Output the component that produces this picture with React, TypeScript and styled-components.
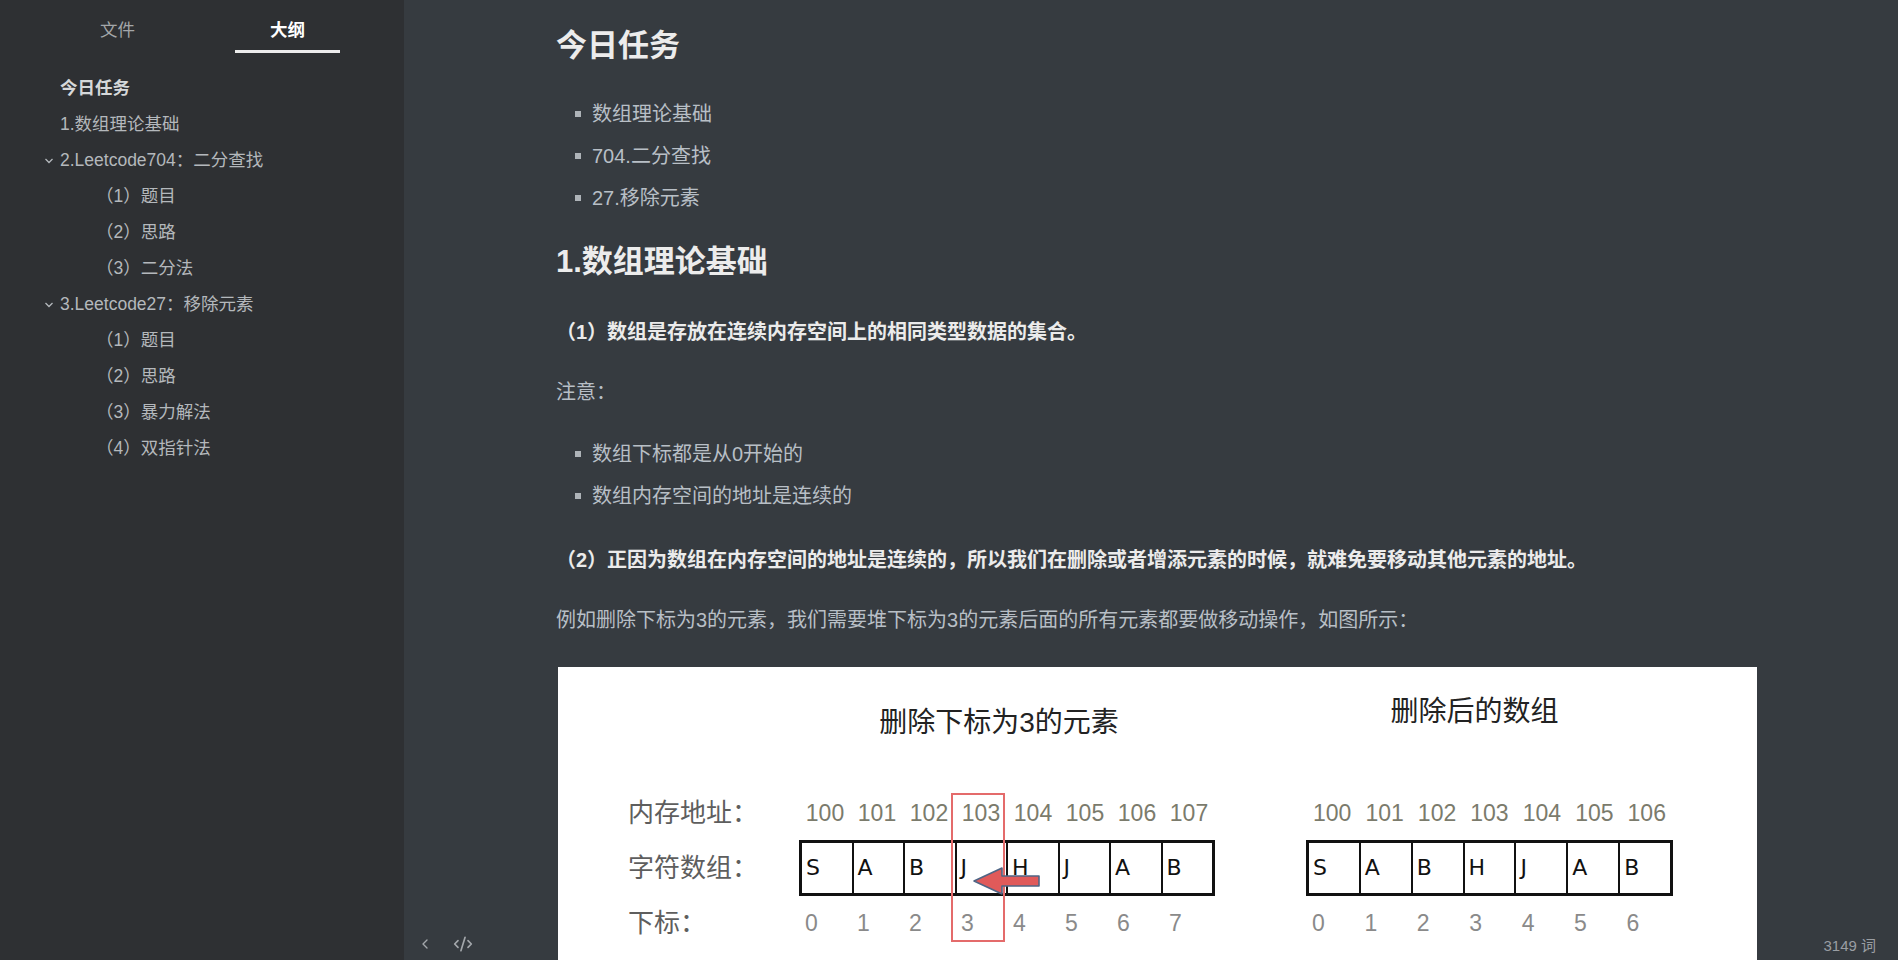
import React from "react";
import styled, { createGlobalStyle } from "styled-components";
import { ChevronLeft, CodeXml } from "lucide-react";

const GlobalStyle = createGlobalStyle`
  html, body {
    margin: 0;
    padding: 0;
    height: 100%;
    overflow: hidden;
    background: #363b40;
  }
  #root {
    height: 100%;
  }
`;

const FONT = `"Liberation Sans", "Noto Sans CJK SC", sans-serif`;

const Shell = styled.div`
  display: flex;
  height: 100vh;
  font-family: ${FONT};
`;

const Sidebar = styled.aside`
  width: 404px;
  flex-shrink: 0;
  background: #2e3033;
  display: flex;
  flex-direction: column;
`;

const TabBar = styled.div`
  display: flex;
  gap: 65px;
  padding-left: 65px;
`;

const Tab = styled.div<{ $active?: boolean }>`
  width: 105px;
  height: 53px;
  box-sizing: border-box;
  padding-top: 6px;
  display: flex;
  align-items: center;
  justify-content: center;
  font-size: 17.5px;
  color: ${({ $active }) => ($active ? "#ffffff" : "#a3a6a9")};
  font-weight: ${({ $active }) => ($active ? 700 : 400)};
  border-bottom: 3px solid
    ${({ $active }) => ($active ? "#ececec" : "transparent")};
`;

const Outline = styled.ul`
  list-style: none;
  margin: 0;
  padding: 15px 0 0;
`;

const OutlineItem = styled.li<{ $level: number; $active?: boolean }>`
  height: 36px;
  display: flex;
  align-items: center;
  padding-left: ${({ $level }) => ($level === 1 ? 44 : 96)}px;
  font-size: 17.5px;
  white-space: nowrap;
  color: ${({ $active }) => ($active ? "#d6d8da" : "#b4b8bc")};
  font-weight: ${({ $active }) => ($active ? 700 : 400)};
`;

const Toggle = styled.span`
  width: 16px;
  height: 16px;
  flex-shrink: 0;
  display: flex;
  align-items: flex-end;
  padding-bottom: 1px;
  box-sizing: border-box;
`;

const Main = styled.main`
  flex: 1;
  position: relative;
  overflow: hidden;
  background: #363b40;
`;

const Content = styled.div`
  width: 1201px;
  margin-left: 152px;
  padding-top: 24px;
  font-size: 20px;
  line-height: 32px;
  color: #b8bfc6;
`;

const H1 = styled.h1`
  margin: 0;
  font-size: 31px;
  line-height: 44px;
  font-weight: 700;
  color: #ececec;
`;

const H2 = styled.h2`
  margin: 26px 0 0;
  font-size: 31px;
  line-height: 44px;
  font-weight: 700;
  color: #ececec;
`;

const Bullets = styled.ul`
  list-style: none;
  margin: 30px 0 0;
  padding: 0;
  display: flex;
  flex-direction: column;
  gap: 10px;
`;

const Bullet = styled.li`
  position: relative;
  padding-left: 36px;
  &::before {
    content: "";
    position: absolute;
    left: 19px;
    top: 13px;
    width: 6px;
    height: 6px;
    background: #aeb3b8;
  }
`;

const Lead = styled.p`
  margin: 32px 0 0;
  font-weight: 700;
  color: #ebebeb;
`;

const P = styled.p`
  margin: 28px 0 0;
`;

const Figure = styled.div`
  margin: 31px 0 0 2px;
  width: 1199px;
  height: 420px;
  background: #ffffff;
`;

const Diagram = styled.div`
  display: grid;
  grid-template-columns: 171px 416px 91px 367px;
  padding: 27px 0 0 70px;
  font-family: ${FONT};
`;

const DiagramTitle = styled.div<{ $drop: number; $shift: number; $col: number }>`
  grid-column: ${({ $col }) => $col};
  grid-row: 1;
  padding-top: ${({ $drop }) => $drop}px;
  padding-right: ${({ $shift }) => $shift}px;
  margin-bottom: 56px;
  font-size: 28px;
  line-height: 36px;
  color: #222;
  text-align: center;
`;

const RowLabel = styled.div<{ $row: number; $gapTop?: number }>`
  grid-column: 1;
  grid-row: ${({ $row }) => $row};
  margin-top: ${({ $gapTop }) => $gapTop ?? 0}px;
  display: flex;
  align-items: center;
  font-size: 26px;
  color: #5e5e5e;
`;

const NumRow = styled.div<{ $col: number; $row: number; $gapTop?: number }>`
  grid-column: ${({ $col }) => $col};
  grid-row: ${({ $row }) => $row};
  margin-top: ${({ $gapTop }) => $gapTop ?? 0}px;
  display: flex;
  height: 32px;
`;

const Addr = styled.span`
  flex: 1;
  text-align: center;
  font-size: 23px;
  line-height: 32px;
  color: #7b7b6c;
`;

const Index = styled.span`
  flex: 1;
  padding-left: 6px;
  font-size: 23px;
  line-height: 32px;
  color: #8a8a8a;
`;

const ArrayWrap = styled.div<{ $col: number }>`
  grid-column: ${({ $col }) => $col};
  grid-row: 3;
  margin-top: 11px;
  position: relative;
`;

const ArrayBox = styled.div`
  display: flex;
  height: 56px;
  box-sizing: border-box;
  border: 3px solid #111;
`;

const Cell = styled.div`
  flex: 1;
  display: flex;
  align-items: center;
  padding-left: 4px;
  font-family: "DejaVu Sans", sans-serif;
  font-size: 22px;
  color: #111;
  & + & {
    border-left: 2px solid #111;
  }
`;

const RedBox = styled.div`
  position: absolute;
  left: 152px;
  top: -47px;
  width: 54px;
  height: 149px;
  box-sizing: border-box;
  border: 2px solid #e46b6b;
`;

const Arrow = styled.svg`
  position: absolute;
  left: 174px;
  top: 26px;
`;

const Footer = styled.div`
  position: absolute;
  left: 0;
  right: 0;
  bottom: 0;
  height: 32px;
  display: flex;
  align-items: center;
  gap: 20px;
  padding: 0 22px 0 13px;
  color: #a3a7ab;
`;

const WordCount = styled.span`
  margin-left: auto;
  font-size: 15px;
  color: #9a9ea3;
`;

const outline: { text: string; level: number; toggle?: boolean; active?: boolean }[] = [
  { text: "今日任务", level: 1, active: true },
  { text: "1.数组理论基础", level: 1 },
  { text: "2.Leetcode704：二分查找", level: 1, toggle: true },
  { text: "（1）题目", level: 2 },
  { text: "（2）思路", level: 2 },
  { text: "（3）二分法", level: 2 },
  { text: "3.Leetcode27：移除元素", level: 1, toggle: true },
  { text: "（1）题目", level: 2 },
  { text: "（2）思路", level: 2 },
  { text: "（3）暴力解法", level: 2 },
  { text: "（4）双指针法", level: 2 },
];

const before = ["S", "A", "B", "J", "H", "J", "A", "B"];
const after = ["S", "A", "B", "H", "J", "A", "B"];

const Caret = () => (
  <svg width="10" height="8" viewBox="0 0 10 8">
    <polyline points="1.5,2 5,5.5 8.5,2" fill="none" stroke="#b4b8bc" strokeWidth="1.3" />
  </svg>
);

export default function App() {
  return (
    <>
      <GlobalStyle />
      <Shell>
        <Sidebar>
          <TabBar>
            <Tab>文件</Tab>
            <Tab $active>大纲</Tab>
          </TabBar>
          <Outline>
            {outline.map((o, i) => (
              <OutlineItem key={i} $level={o.level} $active={o.active}>
                {o.level === 1 && <Toggle>{o.toggle && <Caret />}</Toggle>}
                {o.text}
              </OutlineItem>
            ))}
          </Outline>
        </Sidebar>
        <Main>
          <Content>
            <H1>今日任务</H1>
            <Bullets>
              <Bullet>数组理论基础</Bullet>
              <Bullet>704.二分查找</Bullet>
              <Bullet>27.移除元素</Bullet>
            </Bullets>
            <H2>1.数组理论基础</H2>
            <Lead>（1）数组是存放在连续内存空间上的相同类型数据的集合。</Lead>
            <P>注意：</P>
            <Bullets>
              <Bullet>数组下标都是从0开始的</Bullet>
              <Bullet>数组内存空间的地址是连续的</Bullet>
            </Bullets>
            <Lead>
              （2）正因为数组在内存空间的地址是连续的，所以我们在删除或者增添元素的时候，就难免要移动其他元素的地址。
            </Lead>
            <P>例如删除下标为3的元素，我们需要堆下标为3的元素后面的所有元素都要做移动操作，如图所示：</P>
            <Figure>
              <Diagram>
                <DiagramTitle $col={2} $drop={11} $shift={16}>
                  删除下标为3的元素
                </DiagramTitle>
                <DiagramTitle $col={4} $drop={0} $shift={30}>
                  删除后的数组
                </DiagramTitle>

                <RowLabel $row={2}>内存地址：</RowLabel>
                <NumRow $col={2} $row={2}>
                  {before.map((_, i) => (
                    <Addr key={i}>{100 + i}</Addr>
                  ))}
                </NumRow>
                <NumRow $col={4} $row={2}>
                  {after.map((_, i) => (
                    <Addr key={i}>{100 + i}</Addr>
                  ))}
                </NumRow>

                <RowLabel $row={3} $gapTop={11}>字符数组：</RowLabel>
                <ArrayWrap $col={2}>
                  <ArrayBox>
                    {before.map((c, i) => (
                      <Cell key={i}>{c}</Cell>
                    ))}
                  </ArrayBox>
                  <RedBox />
                  <Arrow width="68" height="30" viewBox="0 0 68 30">
                    <polygon
                      points="1,15 29,2 29,10 66,10 66,20 29,20 29,28"
                      fill="#e05a5a"
                      stroke="#4f6585"
                      strokeWidth="1.6"
                      strokeLinejoin="round"
                    />
                  </Arrow>
                </ArrayWrap>
                <ArrayWrap $col={4}>
                  <ArrayBox>
                    {after.map((c, i) => (
                      <Cell key={i}>{c}</Cell>
                    ))}
                  </ArrayBox>
                </ArrayWrap>

                <RowLabel $row={4} $gapTop={11}>下标：</RowLabel>
                <NumRow $col={2} $row={4} $gapTop={11}>
                  {before.map((_, i) => (
                    <Index key={i}>{i}</Index>
                  ))}
                </NumRow>
                <NumRow $col={4} $row={4} $gapTop={11}>
                  {after.map((_, i) => (
                    <Index key={i}>{i}</Index>
                  ))}
                </NumRow>
              </Diagram>
            </Figure>
          </Content>
          <Footer>
            <ChevronLeft size={16} strokeWidth={2} />
            <CodeXml size={20} strokeWidth={2} />
            <WordCount>3149 词</WordCount>
          </Footer>
        </Main>
      </Shell>
    </>
  );
}
